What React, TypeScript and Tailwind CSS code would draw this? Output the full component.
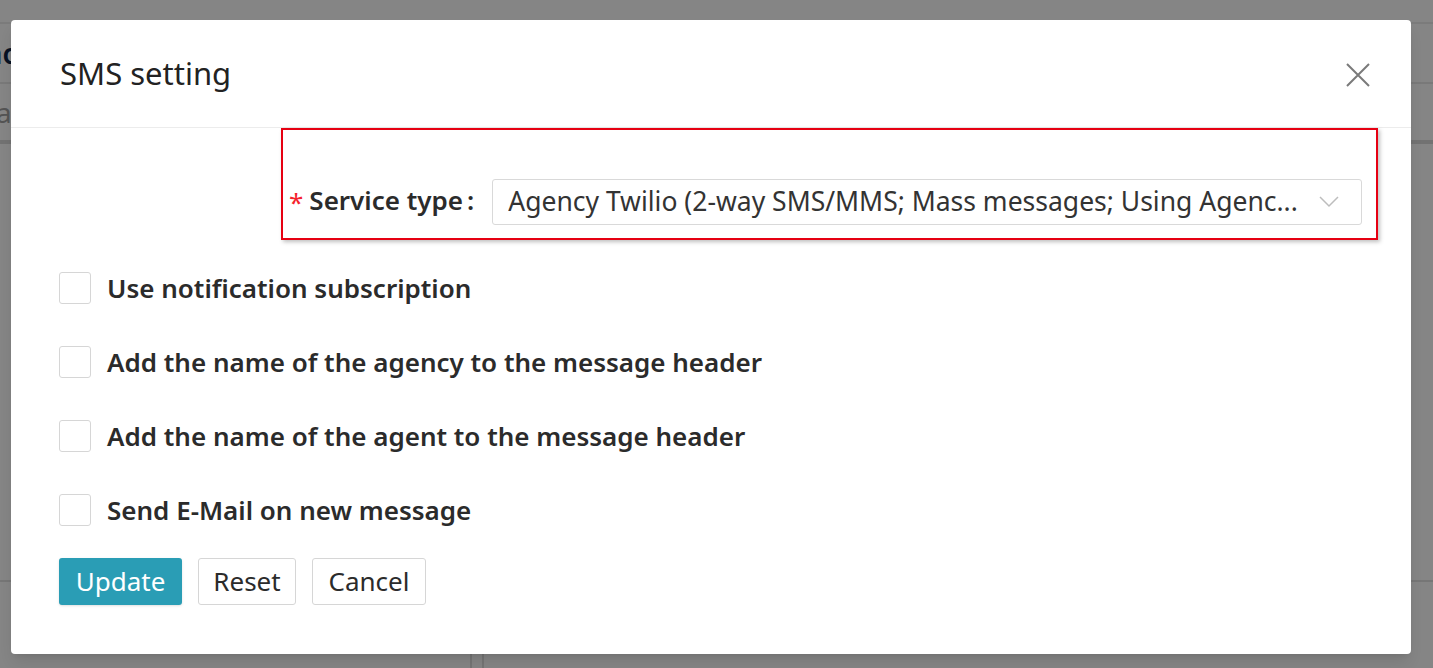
import React from 'react';

const options = [
  'Use notification subscription',
  'Add the name of the agency to the message header',
  'Add the name of the agent to the message header',
  'Send E-Mail on new message',
];

const App: React.FC = () => {
  return (
    <div className="relative h-[668px] w-[1433px] overflow-hidden bg-[#f3f3f3] font-['Noto_Sans',sans-serif]">
      {/* page behind the dialog */}
      <div className="flex h-full flex-col">
        <div className="h-[24px] border-b-2 border-[#e0e0e0]" />
        <div className="flex h-[60px] items-center border-b-2 border-[#dcdcdc]">
          <span className="-ml-[14px] text-[28px] font-semibold text-[#0d2240]">ac</span>
        </div>
        <div className="flex h-[60px] items-center border-b-4 border-[#d0d0d0]">
          <span className="-ml-[4px] text-[28px] text-[#999]">a</span>
        </div>
        <div className="flex-1" />
        <div className="h-[2px] bg-[#d8d8d8]" />
        <div className="flex h-[86px]">
          <div className="w-[472px] border-r-2 border-[#d6d6d6]" />
          <div className="w-[12px] border-r-2 border-[#d6d6d6]" />
        </div>
      </div>

      {/* overlay */}
      <div className="absolute inset-0 bg-black/45 pl-[11px] pt-[20px]">
        <div className="flex h-[634px] w-[1400px] flex-col rounded-[4px] bg-white shadow-lg">
          <div className="flex h-[108px] items-center justify-between border-b border-[#ececec] pl-[49px] pr-[40px]">
            <span className="text-[31px] text-[#222]">SMS setting</span>
            <svg width="26" height="26" viewBox="0 0 26 26" className="mt-[2px]">
              <path d="M2 2 L24 24 M24 2 L2 24" stroke="#7a7a7a" strokeWidth="2" fill="none" />
            </svg>
          </div>

          <div className="flex flex-col px-[48px]">
            <div className="ml-[222px] mr-[-15px] flex h-[112px] items-end border-2 border-[#e60012] pb-[13px] pr-[14px] shadow-[2px_2px_4px_rgba(0,0,0,0.25)]">
              <div className="mb-[2px] flex h-[46px] items-center pl-[6px]">
                <span className="mr-[6px] mt-[4px] text-[26px] leading-none text-[#f5222d]">*</span>
                <span className="text-[26px] font-semibold text-[#2b2b2b]">Service type</span>
                <span className="ml-[4px] mr-[18px] text-[26px] font-semibold text-[#2b2b2b]">:</span>
              </div>
              <div className="flex h-[46px] flex-1 items-center justify-between rounded-[3px] border border-[#d9d9d9] pl-[15px] pr-[22px]">
                <span className="truncate text-[26.5px] text-[#333]">
                  Agency Twilio (2-way SMS/MMS; Mass messages; Using Agenc...
                </span>
                <svg width="20" height="12" viewBox="0 0 20 12" className="ml-4 shrink-0">
                  <path d="M1 1 L10 10 L19 1" stroke="#bdbdbd" strokeWidth="1.5" fill="none" />
                </svg>
              </div>
            </div>

            <div className="mt-[32px] flex flex-col gap-[42px]">
              {options.map((o) => (
                <label key={o} className="flex h-[32px] items-center gap-[16px]">
                  <span className="h-[32px] w-[32px] shrink-0 rounded-[3px] border border-[#d6d6d6] bg-white" />
                  <span className="text-[26px] font-semibold text-[#2b2b2b]">{o}</span>
                </label>
              ))}
            </div>

            <div className="mt-[32px] flex gap-[16px]">
              <button className="h-[47px] w-[123px] rounded-[3px] bg-[#2a9db5] text-[26px] text-white shadow-sm">
                Update
              </button>
              <button className="h-[47px] w-[98px] rounded-[3px] border border-[#d6d6d6] bg-white text-[26px] text-[#2b2b2b]">
                Reset
              </button>
              <button className="h-[47px] w-[114px] rounded-[3px] border border-[#d6d6d6] bg-white text-[26px] text-[#2b2b2b]">
                Cancel
              </button>
            </div>
          </div>
        </div>
      </div>
    </div>
  );
};

export default App;
